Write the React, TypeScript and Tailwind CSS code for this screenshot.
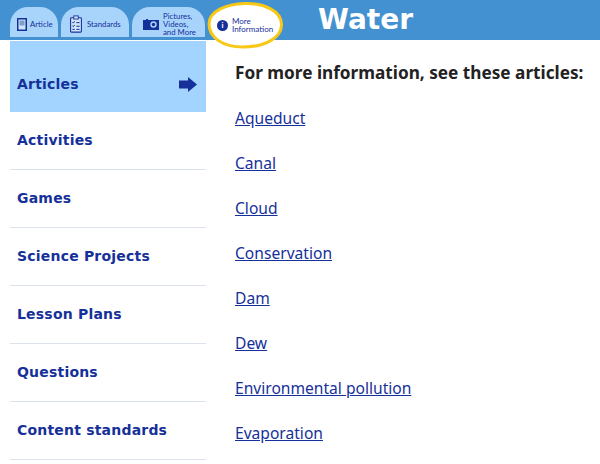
const navItems = ["Activities", "Games", "Science Projects", "Lesson Plans", "Questions", "Content standards"];

const links = ["Aqueduct", "Canal", "Cloud", "Conservation", "Dam", "Dew", "Environmental pollution", "Evaporation"];

function ArticleIcon() {
	return (
		<svg width="10" height="13" viewBox="0 0 10 13" className="shrink-0">
			<rect x="0.750" y="0.750" width="8.500" height="11.500" fill="#cfe4f8" stroke="#16309a" strokeWidth="1.500" />
			<rect x="2.500" y="2.500" width="5" height="5" fill="#7d9fc9" />
		</svg>
	);
}

function ClipboardIcon() {
	return (
		<svg width="14" height="18" viewBox="0 0 14 20" className="shrink-0">
			<rect x="1" y="3" width="12" height="16" rx="1" fill="#cfe4f8" stroke="#16309a" strokeWidth="1.200" />
			<rect x="4.500" y="1" width="5" height="3.500" fill="#cfe4f8" stroke="#16309a" />
			<path d="M3 8l1 1 1.500-2M3 12l1 1 1.500-2M3 16h2.500M7.500 8.500h3.500M7.500 12.500h3.500M7.500 16h3.500" fill="none" stroke="#16309a" strokeWidth="1.100" />
		</svg>
	);
}

function CameraIcon() {
	return (
		<svg width="16" height="11" viewBox="0 0 16 11" className="shrink-0">
			<path d="M0 1h3V0h2v1h11v10H0z" fill="#16309a" />
			<circle cx="10.500" cy="5.500" r="3.200" fill="#a8d4fc" />
			<circle cx="10.500" cy="5.500" r="1.700" fill="#16309a" />
		</svg>
	);
}

function Tab({ className, children }: { className: string; children: React.ReactNode }) {
	return (
		<div
			className={`flex h-[30px] items-center rounded-t-[18px] bg-[#a8d4fc] pt-[4px] font-['Lato',sans-serif] text-[#16309a] text-[7.800px] leading-[8px] ${className}`}
		>
			{children}
		</div>
	);
}

export default function App() {
	return (
		<div className="relative h-[464px] w-[600px] overflow-hidden bg-white font-['Noto_Sans',sans-serif]">
			<header className="flex h-10 items-end bg-[#4491d2] pl-[10px]">
				<Tab className="mb-[3px] w-[48px] gap-[3px] pl-[7px]">
					<ArticleIcon />
					<span>Article</span>
				</Tab>
				<Tab className="mb-[3px] ml-[3px] w-[68px] gap-[4px] pl-2">
					<ClipboardIcon />
					<span>Standards</span>
				</Tab>
				<Tab className="mb-[3px] ml-[3px] w-[73px] gap-[4px] pl-[11px]">
					<CameraIcon />
					<span>
						Pictures,
						<br />
						Videos,
						<br />
						and More
					</span>
				</Tab>
				<div className="relative ml-[2px] h-10 w-[74px] shrink-0">
					<svg className="absolute top-0 -left-[1px]" width="78" height="50" viewBox="0 0 78 50">
						<path
							d="M39 3.500C58 3 75 11 75.500 24 76 37 60 47 37 47 16 47 3 37 3 24 3 11 20 4 39 3.500z"
							fill="white"
							stroke="#f7c815"
							strokeWidth="3"
						/>
					</svg>
					<div className="relative flex h-[50px] items-center gap-[4px] pl-[10px] font-['Lato',sans-serif] text-[#16309a] text-[8px] leading-[8px]">
						<span className="flex size-[11px] shrink-0 items-center justify-center rounded-full bg-[#16309a] font-bold text-[8px] text-white">
							i
						</span>
						<span>
							More
							<br />
							Information
						</span>
					</div>
				</div>
				<h1 className="ml-[37px] self-center font-['DejaVu_Sans',sans-serif] font-bold text-[28px] text-white leading-none">
					Water
				</h1>
			</header>

			<div className="flex">
				<nav className="ml-[10px] w-[196px] font-['DejaVu_Sans',sans-serif] font-bold text-[#16309a] text-[14px] tracking-[0.2px]">
					<div className="mt-[1px] flex h-[71px] items-center justify-between bg-[#a3d3ff] pt-[16px] pr-[9px] pl-[7px]">
						<span>Articles</span>
						<svg width="18" height="15" viewBox="0 0 18 15">
							<path d="M0 3.500h9V0l9 7.500-9 7.500v-3.500H0z" fill="#16309a" />
						</svg>
					</div>
					{navItems.map((item) => (
						<div className="flex h-[58px] items-center border-[#dde3ec] border-b pl-[7px]" key={item}>
							{item}
						</div>
					))}
				</nav>

				<main className="ml-[29px] flex-1">
					<h2 className="mt-[21px] font-bold text-[#222] text-[17.200px] leading-6">
						For more information, see these articles:
					</h2>
					<ul className="mt-[21px] flex flex-col gap-[21px]">
						{links.map((link) => (
							<li className="text-[15.600px] leading-6" key={link}>
								<a className="text-[#16309a] underline" href="#top">
									{link}
								</a>
							</li>
						))}
					</ul>
				</main>
			</div>
		</div>
	);
}
